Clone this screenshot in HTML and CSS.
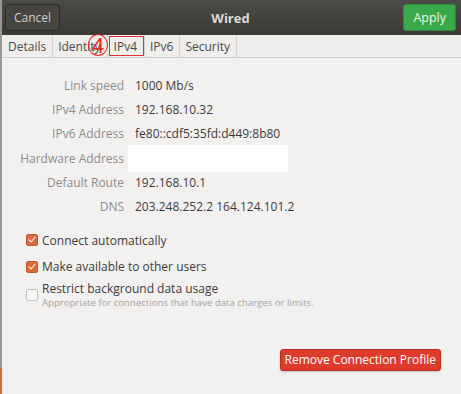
FILE: index.html
```html
<!DOCTYPE html>
<html lang="en">

<head>
  <meta charset="UTF-8">
  <title>Wired</title>
  <link rel="stylesheet" href="styles.css">
</head>

<body>
  <div class="window">
    <header class="headerbar">
      <div class="left"><button class="btn cancel">Cancel</button></div>
      <h1>Wired</h1>
      <div class="right"><button class="btn apply">Apply</button></div>
    </header>

    <nav class="tabs">
      <span class="tab">Details</span>
      <span class="tab">Identity</span>
      <span class="tab marked">IPv4</span>
      <span class="tab">IPv6</span>
      <span class="tab">Security</span>
      <span class="step">4</span>
    </nav>

    <main class="content">
      <div class="details">
        <span class="label">Link speed</span>
        <span class="value">1000 Mb/s</span>
        <span class="label">IPv4 Address</span>
        <span class="value">192.168.10.32</span>
        <span class="label">IPv6 Address</span>
        <span class="value">fe80::cdf5:35fd:d449:8b80</span>
        <span class="label">Hardware Address</span>
        <span class="value"><span class="blank"></span></span>
        <span class="label">Default Route</span>
        <span class="value">192.168.10.1</span>
        <span class="label">DNS</span>
        <span class="value">203.248.252.2 164.124.101.2</span>
      </div>

      <div class="options">
        <label class="check">
          <span class="box on"></span>
          <span>Connect automatically</span>
        </label>
        <label class="check">
          <span class="box on"></span>
          <span>Make available to other users</span>
        </label>
        <label class="check top">
          <span class="box"></span>
          <span class="text">
            Restrict background data usage
            <small>Appropriate for connections that have data charges or limits.</small>
          </span>
        </label>
      </div>

      <div class="actions">
        <button class="btn remove">Remove Connection Profile</button>
      </div>
    </main>
  </div>
</body>

</html>
```

FILE: styles.css
```css
body {
  margin: 0;
  padding: 0;
  font-family: 'Open Sans', 'Noto Sans', sans-serif;
  background-color: #f2f1f0;
  color: #3c3c3c;
}

.window {
  width: 461px;
  height: 394px;
  box-sizing: border-box;
  border-left: 2px solid #9a9996;
  display: flex;
  flex-direction: column;
  position: relative;
}

.window::after {
  content: "";
  position: absolute;
  left: -2px;
  bottom: 0;
  width: 2px;
  height: 26px;
  background: #d46a3a;
}

.headerbar {
  height: 35px;
  display: grid;
  grid-template-columns: 1fr auto 1fr;
  align-items: center;
  padding: 0 5px 0 3px;
  background: linear-gradient(#4c4b47, #3a3935);
}

.headerbar h1 {
  margin: 0;
  font-size: 13px;
  font-weight: bold;
  color: #dcdad5;
}

.right {
  text-align: right;
}

.btn {
  font-family: inherit;
  font-size: 12px;
  border-radius: 3px;
  cursor: pointer;
}

.cancel {
  height: 27px;
  padding: 0 8px;
  background: #46453f;
  border: 1px solid #2c2b28;
  color: #cfcdc8;
}

.apply {
  height: 27px;
  padding: 0 9px;
  background: #3aa949;
  border: 1px solid #2e8a3b;
  color: #e8f5e9;
  font-size: 12.5px;
}

.tabs {
  height: 22px;
  display: flex;
  align-items: stretch;
  padding-left: 1px;
  background: #efeeec;
  border-bottom: 1px solid #cfcdc9;
  position: relative;
}

.tab {
  display: flex;
  align-items: center;
  padding: 0 6px 0 5px;
  font-size: 12px;
  color: #4a4a4a;
  border-right: 1px solid #d6d4d0;
}

.tab.marked {
  outline: 1px solid #e0302a;
  outline-offset: -2px;
  padding: 0 7px 0 6px;
}

.step {
  position: absolute;
  left: 86px;
  top: -1px;
  width: 18px;
  height: 20px;
  border: 1.5px solid #e8281e;
  border-radius: 50%;
  color: #e8281e;
  font-size: 22px;
  line-height: 21px;
  text-align: center;
  font-family: 'Liberation Sans', sans-serif;
}

.content {
  flex: 1;
  display: flex;
  flex-direction: column;
  padding-top: 15px;
}

.details {
  display: grid;
  grid-template-columns: 122px 1fr;
  column-gap: 11px;
  grid-auto-rows: 24.3px;
  align-items: center;
  font-size: 12px;
}

.label {
  text-align: right;
  color: #8c8c8c;
}

.value {
  color: #3c3c3c;
}

.blank {
  display: block;
  width: 160px;
  height: 27px;
  margin-left: -7px;
  background: #ffffff;
}

.options {
  padding: 8px 0 0 24px;
  font-size: 12px;
}

.check {
  display: flex;
  align-items: center;
  gap: 4px;
  height: 26.5px;
}

.check.top {
  align-items: flex-start;
  height: auto;
  padding-top: 1px;
}

.check.top .box {
  margin-top: 8px;
}

.text {
  line-height: 16px;
}

.box {
  width: 10px;
  height: 10px;
  border: 1px solid #c5c3be;
  border-radius: 2px;
  background: #f7f6f5;
  flex: none;
  position: relative;
}

.box.on {
  background: #dd6a3a;
  border-color: #c65a2e;
}

.box.on::after {
  content: "";
  position: absolute;
  left: 3px;
  top: 0px;
  width: 3px;
  height: 6px;
  border: solid #ffffff;
  border-width: 0 1.5px 1.5px 0;
  transform: rotate(40deg);
}

.check small {
  display: block;
  font-size: 9.6px;
  line-height: 11px;
  color: #a3a3a3;
}

.actions {
  display: flex;
  justify-content: flex-end;
  padding: 41px 20px 0 0;
}

.remove {
  height: 22px;
  padding: 0 4px;
  background: #df3b2c;
  border: 1px solid #b82d22;
  color: #ffffff;
  box-shadow: 0 1px 2px rgba(0, 0, 0, 0.2);
}
```
